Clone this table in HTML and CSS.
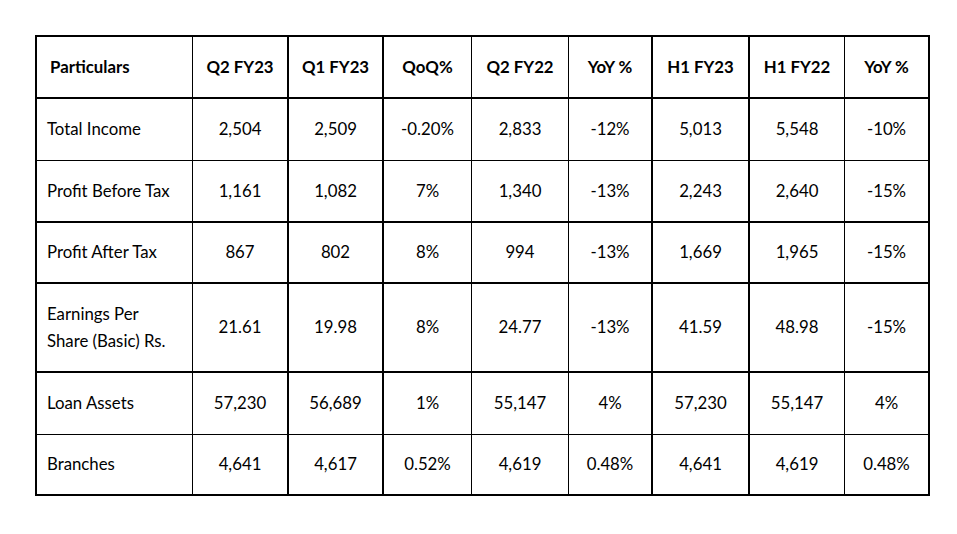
FILE: index.html
```html
<!DOCTYPE html>
<html lang="en">
<head>
<meta charset="utf-8">
<title>Results</title>
<link rel="stylesheet" href="styles.css">
</head>
<body>
<div class="page">
  <div class="table">
    <div class="cell head first row-a col-a">&nbsp;Particulars</div>
    <div class="cell head row-a col-b">Q2 FY23</div>
    <div class="cell head row-a col-b">Q1 FY23</div>
    <div class="cell head row-a col-a">QoQ%</div>
    <div class="cell head row-a col-a">Q2 FY22</div>
    <div class="cell head row-a col-b">YoY %</div>
    <div class="cell head row-a col-b">H1 FY23</div>
    <div class="cell head row-a col-a">H1 FY22</div>
    <div class="cell head row-a col-end">YoY %</div>

    <div class="cell first row-t col-a">Total Income</div>
    <div class="cell row-t col-b">2,504</div>
    <div class="cell row-t col-b">2,509</div>
    <div class="cell row-t col-a">-0.20%</div>
    <div class="cell row-t col-a">2,833</div>
    <div class="cell row-t col-b">-12%</div>
    <div class="cell row-t col-b">5,013</div>
    <div class="cell row-t col-a">5,548</div>
    <div class="cell row-t col-end">-10%</div>

    <div class="cell first row-a col-a">Profit Before Tax</div>
    <div class="cell row-a col-b">1,161</div>
    <div class="cell row-a col-b">1,082</div>
    <div class="cell row-a col-a">7%</div>
    <div class="cell row-a col-a">1,340</div>
    <div class="cell row-a col-b">-13%</div>
    <div class="cell row-a col-b">2,243</div>
    <div class="cell row-a col-a">2,640</div>
    <div class="cell row-a col-end">-15%</div>

    <div class="cell first row-a col-a">Profit After Tax</div>
    <div class="cell row-a col-b">867</div>
    <div class="cell row-a col-b">802</div>
    <div class="cell row-a col-a">8%</div>
    <div class="cell row-a col-a">994</div>
    <div class="cell row-a col-b">-13%</div>
    <div class="cell row-a col-b">1,669</div>
    <div class="cell row-a col-a">1,965</div>
    <div class="cell row-a col-end">-15%</div>

    <div class="cell first row-a col-a">Earnings Per<br>Share (Basic) Rs.</div>
    <div class="cell row-a col-b">21.61</div>
    <div class="cell row-a col-b">19.98</div>
    <div class="cell row-a col-a">8%</div>
    <div class="cell row-a col-a">24.77</div>
    <div class="cell row-a col-b">-13%</div>
    <div class="cell row-a col-b">41.59</div>
    <div class="cell row-a col-a">48.98</div>
    <div class="cell row-a col-end">-15%</div>

    <div class="cell first row-t col-a">Loan Assets</div>
    <div class="cell row-t col-b">57,230</div>
    <div class="cell row-t col-b">56,689</div>
    <div class="cell row-t col-a">1%</div>
    <div class="cell row-t col-a">55,147</div>
    <div class="cell row-t col-b">4%</div>
    <div class="cell row-t col-b">57,230</div>
    <div class="cell row-t col-a">55,147</div>
    <div class="cell row-t col-end">4%</div>

    <div class="cell first row-end col-a">Branches</div>
    <div class="cell row-end col-b">4,641</div>
    <div class="cell row-end col-b">4,617</div>
    <div class="cell row-end col-a">0.52%</div>
    <div class="cell row-end col-a">4,619</div>
    <div class="cell row-end col-b">0.48%</div>
    <div class="cell row-end col-b">4,641</div>
    <div class="cell row-end col-a">4,619</div>
    <div class="cell row-end col-end">0.48%</div>
  </div>
</div>
</body>
</html>
```

FILE: styles.css
```css
* { box-sizing: border-box; }

html, body {
  margin: 0;
  padding: 0;
  background: #ffffff;
}

.page {
  width: 957px;
  height: 534px;
  padding: 35px 0 0 35px;
}

.table {
  display: grid;
  grid-template-columns: 156px 96px 95px 88px 97px 84px 97px 95px 85px;
  grid-template-rows: 62px 62px 62px 61px 89px 62px 61px;
  width: 895px;
  border-left: 2px solid #000;
  border-top: 2px solid #000;
  font-family: "Lato", "Liberation Sans", sans-serif;
  font-size: 16.8px;
  color: #000;
}

.cell {
  display: flex;
  align-items: center;
  justify-content: center;
  text-align: center;
  line-height: 27px;
  padding-bottom: 2px;
  border-right: 1px solid #000;
  border-bottom: 1px solid #000;
}

.cell.first {
  justify-content: flex-start;
  text-align: left;
  padding-left: 10px;
}

.head {
  font-weight: 700;
}

.head.first {
  padding-left: 9px;
}

.col-b { border-right-width: 2px; }
.col-end { border-right-width: 2px; }

.row-a { border-bottom-width: 2px; }
.row-end { border-bottom-width: 2px; }
```
